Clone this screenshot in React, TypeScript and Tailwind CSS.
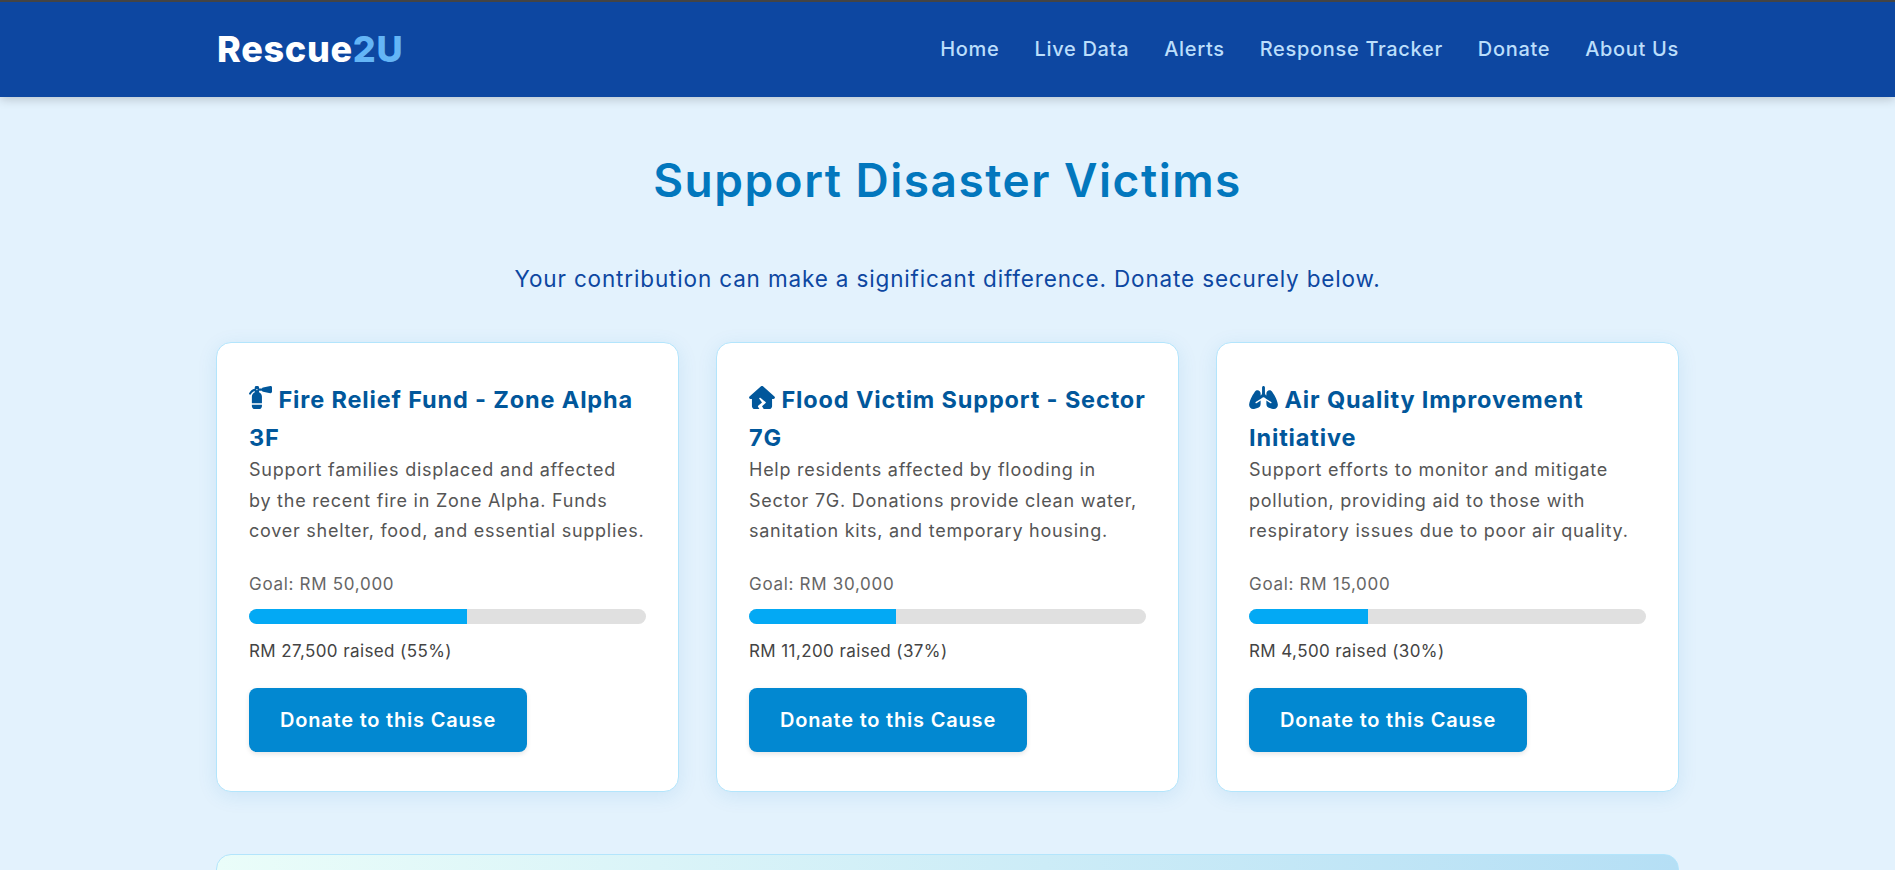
import { FaFireExtinguisher, FaHouseCrack, FaLungs } from "react-icons/fa6";
import type { IconType } from "react-icons";

interface Cause {
  icon: IconType;
  iconClass: string;
  title: string;
  description: string;
  goal: string;
  raised: string;
  percent: number;
}

const causes: Cause[] = [
  {
    icon: FaFireExtinguisher,
    iconClass: "w-[23px]",
    title: "Fire Relief Fund - Zone Alpha 3F",
    description:
      "Support families displaced and affected\nby the recent fire in Zone Alpha. Funds\ncover shelter, food, and essential supplies.",
    goal: "Goal: RM 50,000",
    raised: "RM 27,500 raised (55%)",
    percent: 55,
  },
  {
    icon: FaHouseCrack,
    iconClass: "w-[26px]",
    title: "Flood Victim Support - Sector 7G",
    description:
      "Help residents affected by flooding in Sector 7G. Donations provide clean water, sanitation kits, and temporary housing.",
    goal: "Goal: RM 30,000",
    raised: "RM 11,200 raised (37%)",
    percent: 37,
  },
  {
    icon: FaLungs,
    iconClass: "w-[29px]",
    title: "Air Quality Improvement Initiative",
    description:
      "Support efforts to monitor and mitigate pollution, providing aid to those with respiratory issues due to poor air quality.",
    goal: "Goal: RM 15,000",
    raised: "RM 4,500 raised (30%)",
    percent: 30,
  },
];

const navLinks = ["Home", "Live Data", "Alerts", "Response Tracker", "Donate", "About Us"];

function CauseCard({ cause }: { cause: Cause }) {
  const Icon = cause.icon;
  return (
    <div className="bg-white border border-[#b3e5fc] rounded-[15px] pt-[38px] pb-[39px] px-8 shadow-[0_4px_20px_rgba(2,119,189,0.1)]">
      <h3 className="text-[23.5px] leading-[37.5px] font-bold text-[#01579b] tracking-[0.85px]">
        <Icon className={`inline-block h-[23px] align-[-1px] ${cause.iconClass}`} /> {cause.title}
      </h3>
      <p className="-mt-px whitespace-pre-line text-[18px] leading-[30.6px] text-[#555] tracking-[0.75px]">{cause.description}</p>
      <p className="mt-[22px] text-[17px] leading-[30px] text-[#666] tracking-[0.7px]">{cause.goal}</p>
      <div className="mt-[10px] h-[15px] bg-[#e0e0e0] rounded-lg overflow-hidden">
        <div className="h-full bg-[#03a9f4]" style={{ width: `${cause.percent}%` }} />
      </div>
      <p className="mt-[12px] text-[17px] leading-[30px] text-[#444] tracking-[0.4px]">{cause.raised}</p>
      <button className="mt-[22px] block w-[278px] h-[64px] bg-[#0288d1] text-white rounded-lg text-[20px] font-semibold tracking-[0.8px] shadow-[0_2px_5px_rgba(0,0,0,0.1)]">
        Donate to this Cause
      </button>
    </div>
  );
}

export default function App() {
  return (
    <div className="h-[870px] overflow-hidden bg-[#e3f2fd] font-['Inter',sans-serif]">
      <header className="h-[97px] border-t-2 border-[#444] bg-[#0d47a1] shadow-[0_2px_10px_rgba(0,0,0,0.2)] relative">
        <div className="mx-[216px] pb-[2px] h-full flex items-center justify-between">
          <div className="ml-px text-[36px] font-extrabold text-white tracking-[0.7px]">
            Rescue<span className="text-[#64b5f6]">2U</span>
          </div>
          <nav className="flex gap-[35px]">
            {navLinks.map((link) => (
              <a key={link} className="text-[20px] font-medium text-[#bbdefb] tracking-[0.68px]">
                {link}
              </a>
            ))}
          </nav>
        </div>
      </header>

      <main className="mx-[216px]">
        <h1 className="mt-[51px] text-center text-[46px] leading-[64px] font-semibold text-[#0277bd] tracking-[1.5px]">
          Support Disaster Victims
        </h1>
        <p className="mt-[50px] text-center text-[22.5px] leading-[34px] text-[#0d47a1] tracking-[0.85px]">
          Your contribution can make a significant difference. Donate securely below.
        </p>
        <div className="mt-[46px] grid grid-cols-3 gap-[37px]">
          {causes.map((cause) => (
            <CauseCard key={cause.title} cause={cause} />
          ))}
        </div>
        <div className="mt-[62px] h-[200px] rounded-[15px] border border-[#b3e5fc] bg-gradient-to-r from-[#eafdf9] to-[#b5dff5]" />
      </main>
    </div>
  );
}
